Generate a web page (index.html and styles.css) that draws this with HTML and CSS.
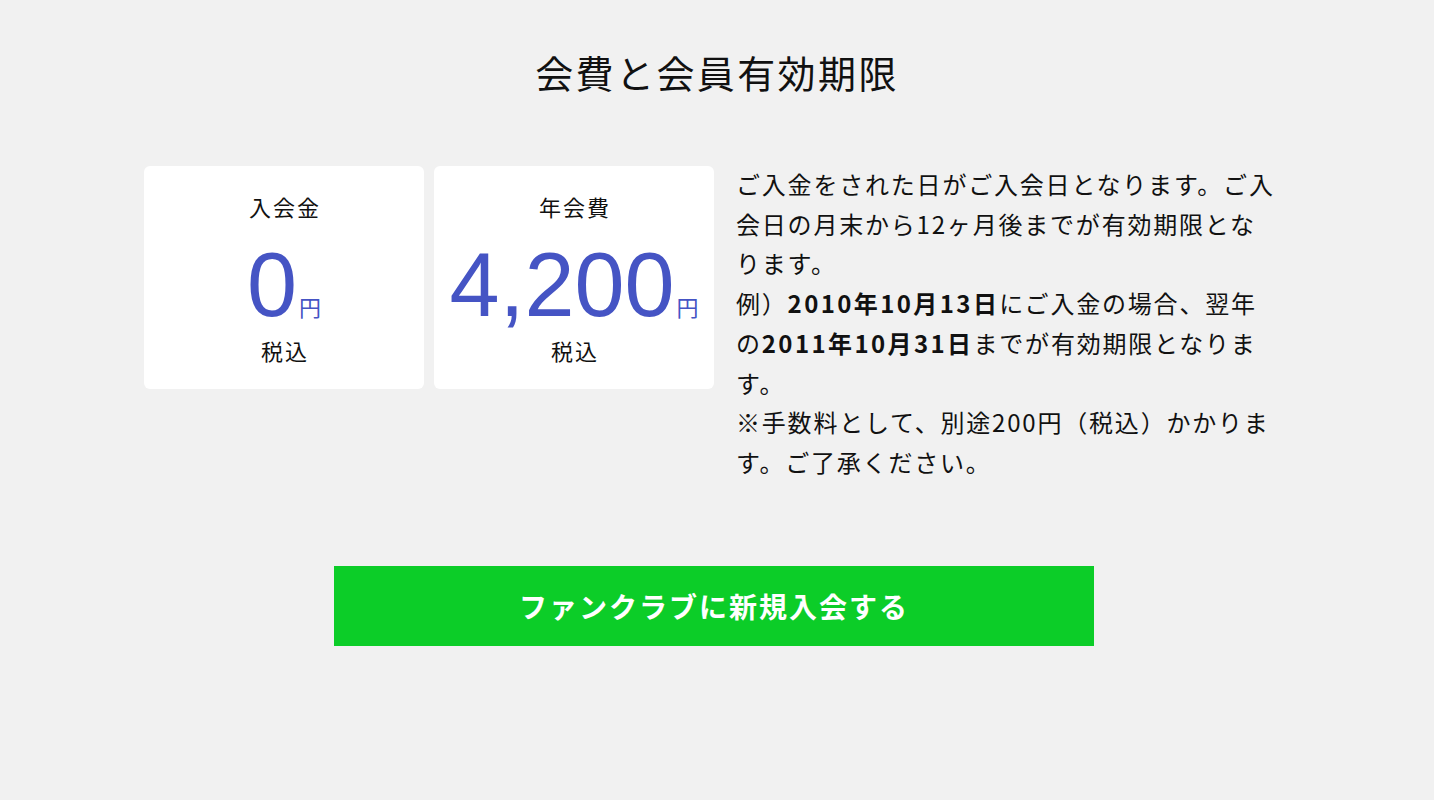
FILE: index.html
```html
<!DOCTYPE html>
<html lang="ja">
<head>
<meta charset="utf-8">
<title>会費と会員有効期限</title>
<link rel="stylesheet" href="styles.css">
</head>
<body>
<main class="page">
  <h1 class="title">会費と会員有効期限</h1>
  <section class="fees">
    <div class="cards">
      <div class="card">
        <div class="card-label">入会金</div>
        <div class="card-price"><span class="num">0</span><span class="yen">円</span></div>
        <div class="card-note">税込</div>
      </div>
      <div class="card">
        <div class="card-label">年会費</div>
        <div class="card-price"><span class="num">4,200</span><span class="yen">円</span></div>
        <div class="card-note">税込</div>
      </div>
    </div>
    <p class="desc">ご入金をされた日がご入会日となります。ご入<br>会日の月末から12ヶ月後までが有効期限とな<br>ります。<br>例）<b>2010年10月13日</b>にご入金の場合、翌年<br>の<b>2011年10月31日</b>までが有効期限となりま<br>す。<br>※手数料として、別途200円（税込）かかりま<br>す。ご了承ください。</p>
  </section>
  <div class="cta-wrap">
    <a class="cta" href="#">ファンクラブに新規入会する</a>
  </div>
</main>
</body>
</html>
```

FILE: styles.css
```css
html, body {
  margin: 0;
  padding: 0;
}
body {
  background: #f1f1f1;
  color: #111;
  font-family: "Noto Sans CJK JP", "Noto Sans", sans-serif;
}
.page {
  width: 1146px;
  margin: 0 auto;
  padding-top: 45px;
}
.title {
  margin: 0;
  text-align: center;
  font-size: 38px;
  font-weight: 400;
  line-height: 54px;
  letter-spacing: 2.4px;
}
.fees {
  margin-top: 67px;
  display: flex;
  gap: 22px;
  align-items: flex-start;
}
.cards {
  display: flex;
  gap: 10px;
}
.card {
  width: 280px;
  background: #fff;
  border-radius: 6px;
  text-align: center;
  padding: 24px 0 20px;
  box-sizing: border-box;
  height: 223px;
}
.card-label, .card-note {
  font-size: 22px;
  line-height: 33px;
  letter-spacing: 2px;
  padding-left: 2px;
}
.card-price {
  margin-top: 17px;
  margin-bottom: 4px;
  height: 90px;
  line-height: 90px;
  color: #4554c4;
  white-space: nowrap;
}
.num {
  font-family: "Liberation Sans", Arial, sans-serif;
  font-size: 90px;
  line-height: 90px;
}
.yen {
  font-size: 22px;
  line-height: 0;
  margin-left: 2px;
}
.desc {
  margin: -2px 0 0;
  width: 560px;
  font-size: 24px;
  line-height: 39.7px;
  letter-spacing: 1.8px;
  white-space: nowrap;
}
.desc b {
  font-weight: 700;
  letter-spacing: 2.4px;
}
.cta-wrap {
  margin-top: 84px;
  display: flex;
  justify-content: center;
  padding-right: 6px;
}
.cta {
  width: 760px;
  height: 80px;
  display: flex;
  align-items: center;
  justify-content: center;
  background: #0ccd28;
  color: #fff;
  font-size: 28px;
  font-weight: 700;
  letter-spacing: 2px;
  text-decoration: none;
}
```
